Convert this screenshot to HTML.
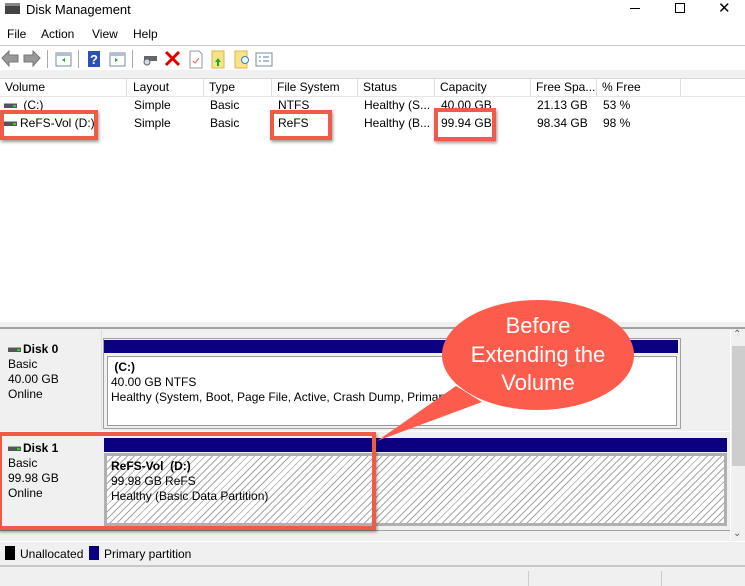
<!DOCTYPE html>
<html><head><meta charset="utf-8"><style>
*{margin:0;padding:0;box-sizing:border-box}
body{width:745px;height:586px;overflow:hidden;background:#fff;font-family:"Liberation Sans",sans-serif;font-size:12px;color:#000;position:relative}
.a{position:absolute;white-space:nowrap}
.red{position:absolute;border:4px solid #f05a48;box-shadow:1px 2px 3px rgba(0,0,0,.4)}
.hd{position:absolute;top:79px;height:17px;border-right:1px solid #e0e0e0;padding-left:5px;line-height:17px}
.hatch{background-color:#fff;background-image:repeating-linear-gradient(135deg,transparent 0 4px,#a5a5a5 4px 5px)}
.drv{display:inline-block;width:13px;height:5px;background:#555;border-top:1px solid #aaa;vertical-align:middle;margin-right:3px;position:relative}
.drv:after{content:"";position:absolute;right:1px;top:1px;width:3px;height:2px;background:#3c3}
</style></head><body>
<div class="a" style="left:5px;top:3px;width:15px;height:11px;background:#444;border-top:3px solid #888"></div>
<div class="a" style="left:26px;top:2px;font-size:13px">Disk Management</div>
<div class="a" style="left:630px;top:8px;width:10px;height:1px;background:#000"></div>
<div class="a" style="left:675px;top:3px;width:10px;height:10px;border:1px solid #000"></div>
<div class="a" style="left:718px;top:-1px;font-size:15px">✕</div>
<div class="a" style="left:7px;top:27px">File</div>
<div class="a" style="left:41px;top:27px">Action</div>
<div class="a" style="left:92px;top:27px">View</div>
<div class="a" style="left:133px;top:27px">Help</div>
<div class="a" style="left:0;top:45px;width:745px;height:1px;background:#c8c8c8"></div>
<svg class="a" style="left:0;top:48px" width="280" height="22">
<path d="M2 10 L9 3 L9 7 L18 7 L18 14 L9 14 L9 18 Z" fill="#999" stroke="#777"/>
<path d="M40 10 L33 3 L33 7 L24 7 L24 14 L33 14 L33 18 Z" fill="#999" stroke="#777"/>
<rect x="47" y="2" width="1" height="18" fill="#aaa"/><rect x="78" y="2" width="1" height="18" fill="#aaa"/><rect x="132" y="2" width="1" height="18" fill="#aaa"/>
<rect x="56" y="5" width="15" height="13" fill="#fff" stroke="#7a8a9a"/><rect x="56" y="5" width="15" height="3" fill="#b0c0d0"/><path d="M65 10 L62 12 L65 14Z" fill="#2a2"/>
<rect x="88" y="3" width="12" height="16" fill="#2c4fb8"/><text x="90" y="16" fill="#fff" font-size="13" font-weight="bold" font-family="Liberation Sans">?</text>
<rect x="110" y="5" width="15" height="13" fill="#fff" stroke="#7a8a9a"/><rect x="110" y="5" width="15" height="3" fill="#b0c0d0"/><path d="M115 10 L118 12 L115 14Z" fill="#2a2"/>
<rect x="144" y="8" width="13" height="5" fill="#666"/><circle cx="147" cy="14" r="3" fill="#cde" stroke="#666"/>
<path d="M166 4 L179 17 M179 4 L166 17" stroke="#d00" stroke-width="3"/>
<path d="M190 3 L199 3 L202 6 L202 20 L190 20Z" fill="#fff" stroke="#999"/><path d="M193 13 L195 15 L199 10" stroke="#e55" fill="none"/>
<rect x="212" y="3" width="12" height="17" fill="#f7e48a" stroke="#d8b84a"/><path d="M218 10 L221 14 L219 14 L219 18 L217 18 L217 14 L215 14Z" fill="#2a2"/>
<rect x="235" y="3" width="12" height="17" fill="#f7e48a" stroke="#d8b84a"/><circle cx="245" cy="12" r="3.5" fill="#dff" stroke="#57a"/>
<rect x="256" y="5" width="16" height="13" fill="#fff" stroke="#7a8a9a"/><path d="M259 9h2M263 9h6M259 13h2M263 13h6" stroke="#57a"/>
</svg>
<div class="a" style="left:0;top:70px;width:745px;height:9px;background:#f0f0f0;border-bottom:1px solid #d8d8d8"></div>
<div class="hd" style="left:0;width:127px">Volume</div>
<div class="hd" style="left:128px;width:76px">Layout</div>
<div class="hd" style="left:204px;width:68px">Type</div>
<div class="hd" style="left:272px;width:86px">File System</div>
<div class="hd" style="left:358px;width:77px">Status</div>
<div class="hd" style="left:435px;width:96px">Capacity</div>
<div class="hd" style="left:531px;width:66px">Free Spa...</div>
<div class="hd" style="left:597px;width:84px">% Free</div>
<div class="a" style="left:0;top:96px;width:745px;height:1px;background:#e5e5e5"></div>
<div class="a" style="left:4px;top:98px"><span class="drv"></span> (C:)</div>
<div class="a" style="left:134px;top:98px">Simple</div><div class="a" style="left:210px;top:98px">Basic</div>
<div class="a" style="left:278px;top:98px">NTFS</div><div class="a" style="left:364px;top:98px">Healthy (S...</div>
<div class="a" style="left:441px;top:98px">40.00 GB</div><div class="a" style="left:537px;top:98px">21.13 GB</div><div class="a" style="left:603px;top:98px">53 %</div>
<div class="a" style="left:4px;top:116px"><span class="drv"></span>ReFS-Vol (D:)</div>
<div class="a" style="left:134px;top:116px">Simple</div><div class="a" style="left:210px;top:116px">Basic</div>
<div class="a" style="left:278px;top:116px">ReFS</div><div class="a" style="left:364px;top:116px">Healthy (B...</div>
<div class="a" style="left:441px;top:116px">99.94 GB</div><div class="a" style="left:537px;top:116px">98.34 GB</div><div class="a" style="left:603px;top:116px">98 %</div>
<div class="red" style="left:0;top:110px;width:98px;height:30px"></div>
<div class="red" style="left:270px;top:110px;width:62px;height:30px"></div>
<div class="red" style="left:434px;top:108px;width:62px;height:33px"></div>
<div class="a" style="left:0;top:322px;width:745px;height:5px;background:#f0f0f0"></div>
<div class="a" style="left:0;top:327px;width:745px;height:2px;background:#a0a0a0"></div>
<div class="a" style="left:0;top:329px;width:745px;height:212px;background:#f0f0f0"></div>
<div class="a" style="left:101px;top:330px;width:1px;height:100px;background:#ddd"></div>
<div class="a" style="left:8px;top:342px;line-height:15px"><span class="drv" style="margin-right:2px"></span><b>Disk 0</b><br>Basic<br>40.00 GB<br>Online</div>
<div class="a" style="left:103px;top:338px;width:578px;height:91px;border:1px solid #a0a0a0;background:#f0f0f0"></div>
<div class="a" style="left:104px;top:340px;width:574px;height:13px;background:#0a0080"></div>
<div class="a" style="left:107px;top:356px;width:570px;height:70px;background:#fff;border:1px solid #999;padding:3px 3px;line-height:15px"><b>&nbsp;(C:)</b><br>40.00 GB NTFS<br>Healthy (System, Boot, Page File, Active, Crash Dump, Primary P</div>
<div class="a" style="left:0;top:431px;width:730px;height:1px;background:#fff"></div>
<div class="a" style="left:8px;top:441px;line-height:15px"><span class="drv" style="margin-right:2px"></span><b>Disk 1</b><br>Basic<br>99.98 GB<br>Online</div>
<div class="a" style="left:104px;top:438px;width:623px;height:14px;background:#0a0080"></div>
<div class="a hatch" style="left:104px;top:453px;width:623px;height:73px;border:3px solid #b0b0b0;padding:3px 4px;line-height:15px"><b>ReFS-Vol&nbsp; (D:)</b><br>99.98 GB ReFS<br>Healthy (Basic Data Partition)</div>
<div class="a" style="left:0;top:530px;width:730px;height:1px;background:#a0a0a0"></div>
<div class="red" style="left:-2px;top:432px;width:378px;height:98px"></div>
<div class="a" style="left:730px;top:330px;width:15px;height:210px;background:#f0f0f0;border-left:1px solid #fff"></div>
<div class="a" style="left:732px;top:346px;width:13px;height:120px;background:#cdcdcd"></div>
<div class="a" style="left:733px;top:329px;font-size:10px;color:#606060">&#8963;</div>
<div class="a" style="left:733px;top:528px;font-size:10px;color:#606060">&#8964;</div>
<div class="a" style="left:0;top:541px;width:745px;height:24px;background:#f0f0f0;border-top:1px solid #fff"></div>
<div class="a" style="left:5px;top:546px;width:10px;height:14px;background:#000"></div>
<div class="a" style="left:20px;top:547px">Unallocated</div>
<div class="a" style="left:89px;top:546px;width:10px;height:14px;background:#0a0080"></div>
<div class="a" style="left:104px;top:547px">Primary partition</div>
<div class="a" style="left:0;top:565px;width:745px;height:2px;background:#c8c8c8"></div>
<div class="a" style="left:0;top:567px;width:745px;height:19px;background:#f0f0f0"></div>
<div class="a" style="left:528px;top:571px;width:1px;height:15px;background:#ccc"></div>
<div class="a" style="left:661px;top:571px;width:1px;height:15px;background:#ccc"></div>
<svg class="a" style="left:370px;top:298px" width="280" height="160">
<path d="M86 88 L7 143 L112 104 Z" fill="#fd5c4c"/>
<ellipse cx="168" cy="57" rx="96" ry="55" fill="#fd5c4c"/>
<text fill="#fff" font-family="Liberation Sans" font-size="22" text-anchor="middle" textLength="0"><tspan x="168" y="35">Before</tspan><tspan x="168" y="64">Extending the</tspan><tspan x="168" y="92">Volume</tspan></text>
</svg>
</body></html>
